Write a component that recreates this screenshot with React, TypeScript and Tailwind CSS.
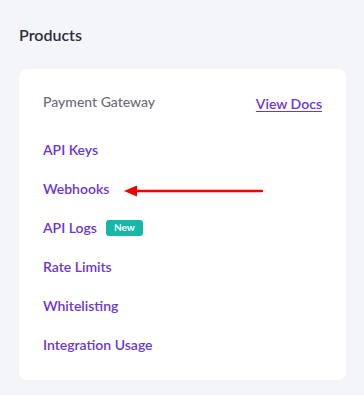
import React from "react";

const LINKS = ["API Keys", "Webhooks", "API Logs", "Rate Limits", "Whitelisting", "Integration Usage"];

export default function App() {
    return (
        <div className="w-[364px] h-[395px] bg-[#f4f5f9] pt-[25px] px-[19px]" style={{ fontFamily: "Lato, 'Open Sans', sans-serif" }}>
            <h2 className="text-[16px] leading-[20px] font-semibold text-[#2c2e3d]">Products</h2>

            {/* Card */}
            <div className="mt-[24px] w-[327px] bg-white rounded-[8px] px-[24px] pt-[22px] pb-[16px]">
                <div className="flex items-center justify-between h-[20px]">
                    <span className="text-[14px] font-medium text-[#6c6c7c]">Payment Gateway</span>
                    <a href="#" className="text-[14px] font-semibold text-[#6b36d6] underline underline-offset-2 mt-[4px]">View Docs</a>
                </div>

                <ul className="mt-[19px]">
                    {LINKS.map(label => (
                        <li key={label} className="h-[39px] flex items-center">
                            <a href="#" className="text-[14px] font-semibold text-[#6b36d6]">{label}</a>
                            {label === "API Logs" && (
                                <span className="ml-[9px] h-[16px] px-[8px] flex items-center rounded-[3px] bg-[#16b6a9] text-white text-[10px] font-bold">New</span>
                            )}
                            {label === "Webhooks" && (
                                <svg className="ml-[15px] mt-[4px]" width="139" height="12" viewBox="0 0 139 12">
                                    <line x1="10" y1="6" x2="138" y2="6" stroke="#f20000" strokeWidth="2.5" strokeLinecap="round" />
                                    <polygon points="0,6 13,0.5 13,11.5" fill="#f20000" />
                                </svg>
                            )}
                        </li>
                    ))}
                </ul>
            </div>
        </div>
    );
}
